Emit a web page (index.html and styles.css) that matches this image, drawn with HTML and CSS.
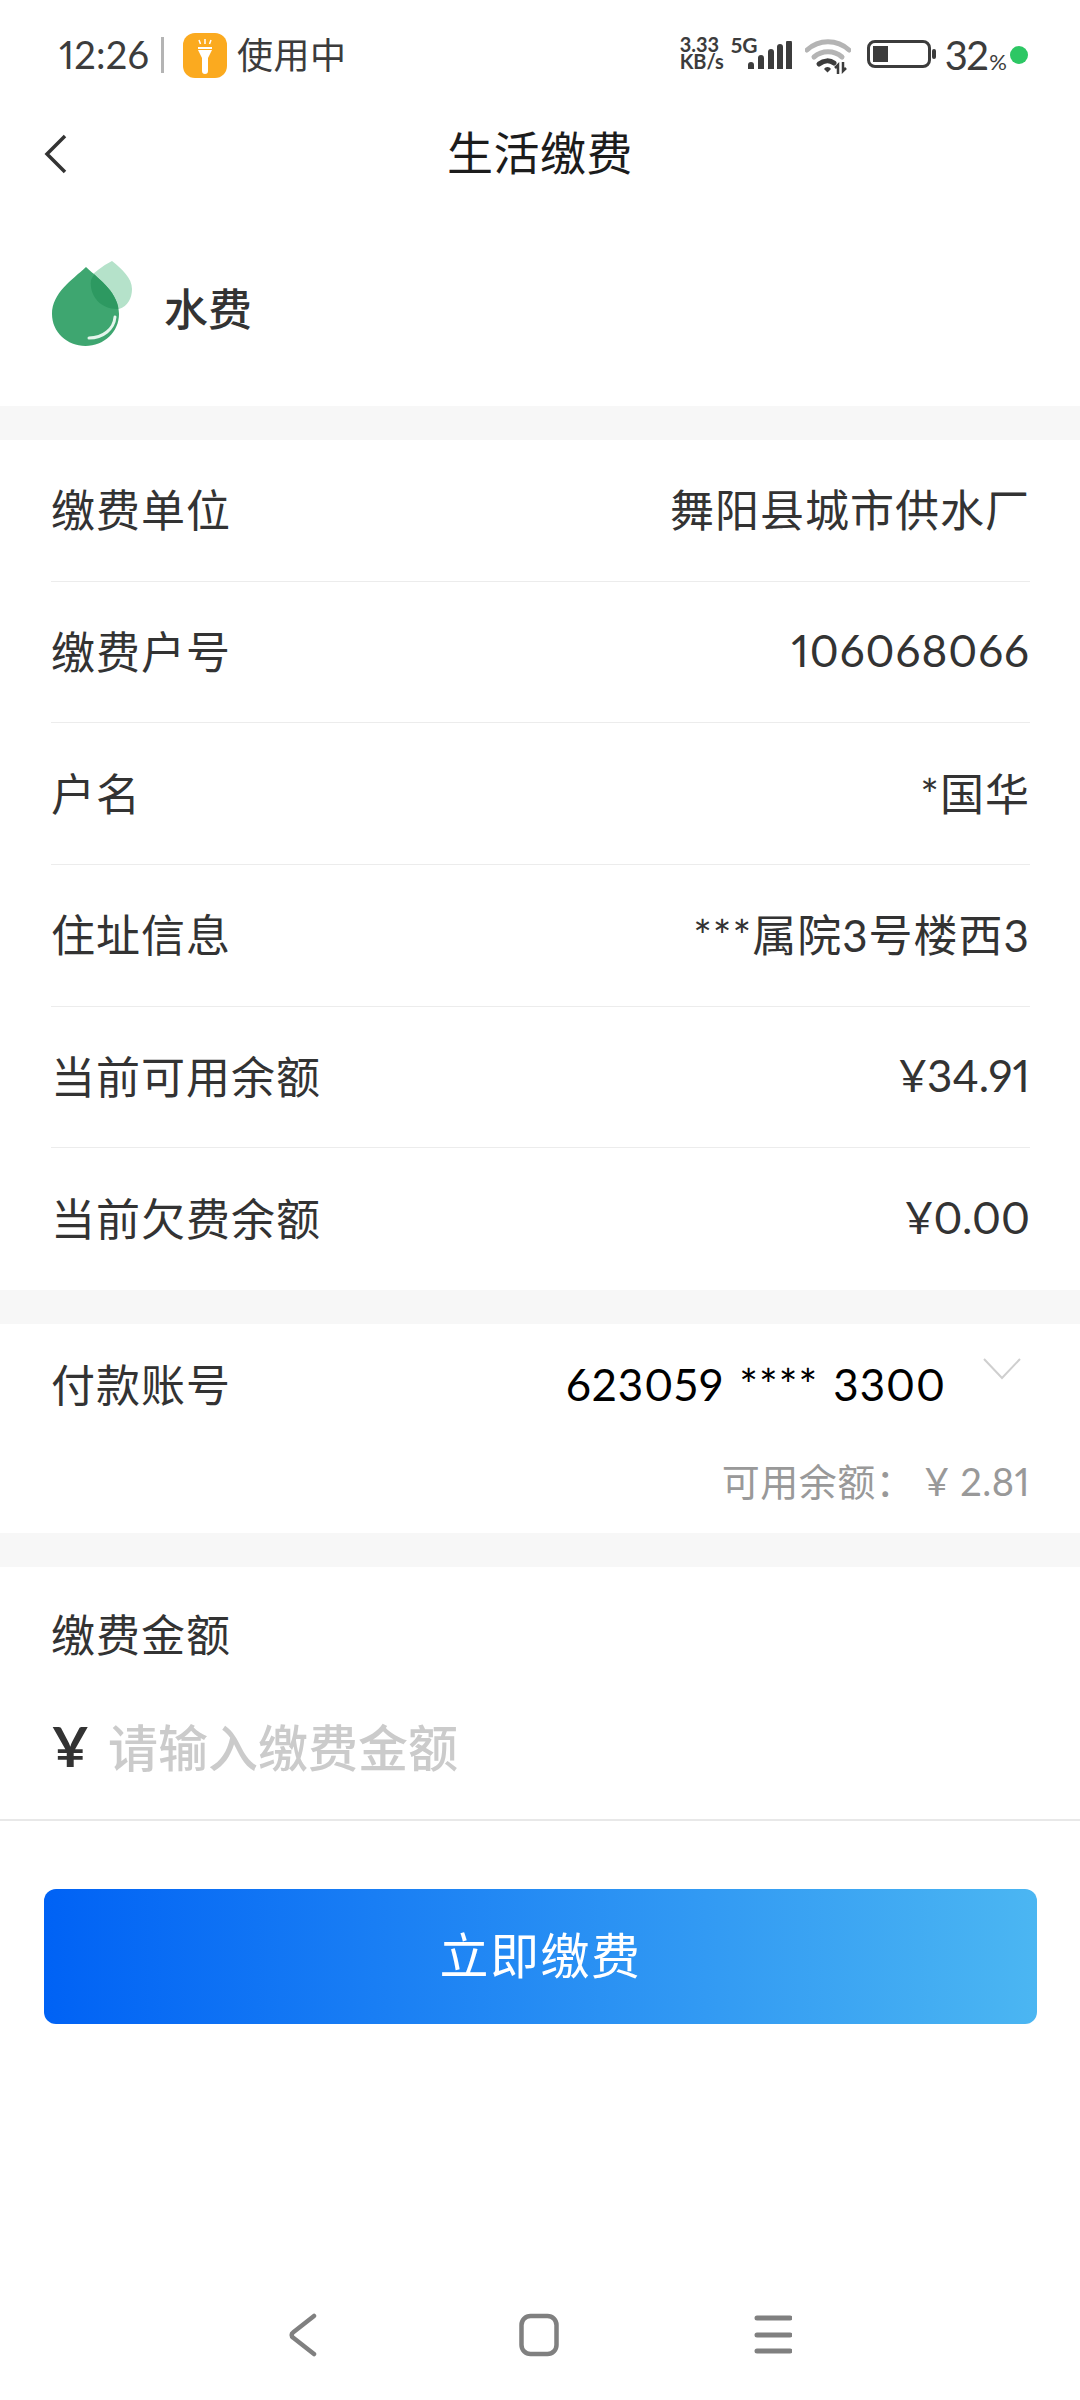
FILE: index.html
```html
<!DOCTYPE html>
<html lang="zh-CN">
<head>
  <meta charset="UTF-8" />
  <meta name="viewport" content="width=device-width, initial-scale=1.0"/>
  <title>生活缴费</title>
  <link rel="stylesheet" href="styles.css">
</head>

<body>
  <div class="page">
    <div class="status-bar">
      <div class="status-left">
        <span class="time">12:26</span>
        <span class="time-sep"></span>
        <span class="torch">
          <svg width="44" height="45" viewBox="0 0 44 45">
            <path d="M15 17h14l-4 8v13a3 3 0 0 1-6 0V25z" fill="#fff"/>
            <rect x="15" y="14" width="14" height="2" fill="#fff"/>
            <path d="M16 7l1.500 4M22 6v5M28 7l-1.500 4" stroke="#fff" stroke-width="1.500" fill="none"/>
          </svg>
        </span>
        <span class="in-use">使用中</span>
      </div>
      <div class="status-right">
        <div class="speed"><span>3.33</span><span>KB/s</span></div>
        <div class="net">
          <span class="net-5g">5G</span>
          <svg class="signal" width="45" height="28" viewBox="0 0 45 28">
            <path d="M1 28v-4a3 3 0 0 1 6 0v4zM11 28V17a3 3 0 0 1 6 0v11zM21 28V11a3 3 0 0 1 6 0v17zM30 28V6a3 3 0 0 1 6 0v22zM39 28V2a3 3 0 0 1 6 0v26z" fill="#3c3c3c"/>
          </svg>
        </div>
        <svg class="wifi" width="46" height="36" viewBox="0 0 46 36">
          <path d="M2 12C14 1 32 1 44 12" stroke="#b4b4b4" stroke-width="5" fill="none" stroke-linecap="round"/>
          <path d="M9 19c8-7 20-7 28 0" stroke="#b4b4b4" stroke-width="5" fill="none" stroke-linecap="round"/>
          <path d="M14 26c5-4 11-4 15-1" stroke="#3c3c3c" stroke-width="5" fill="none" stroke-linecap="round"/>
          <path d="M19 31a4 4 0 0 1 7 0l-3.500 3.500z" fill="#3c3c3c"/>
          <path d="M33 36V27l-3 3M38 24v9l3-3" stroke="#3c3c3c" stroke-width="2.500" fill="none"/>
        </svg>
        <div class="battery">
          <div class="battery-body"><span class="battery-level"></span></div>
          <span class="battery-nub"></span>
        </div>
        <div class="percent"><span class="percent-num">32</span><span class="percent-sign">%</span></div>
        <span class="green-dot"></span>
      </div>
    </div>

    <div class="nav-bar">
      <svg class="back" width="24" height="40" viewBox="0 0 24 40">
        <path d="M21 2L3 20l18 18" stroke="#333" stroke-width="3.500" fill="none"/>
      </svg>
      <h1 class="title">生活缴费</h1>
    </div>

    <div class="biller">
      <svg class="drop" width="90" height="95" viewBox="0 0 90 95">
        <defs>
          <clipPath id="mainDrop">
            <path d="M36 11C22 24 2 37 2 58c0 18 15 32 33.500 32S69 76 69 58C69 37 50 24 36 11z"/>
          </clipPath>
        </defs>
        <path d="M62 5C52 10 44 17 36 24c14 10 30 20 33 29 9-3 13-11 13-20C82 22 72 13 62 5z" fill="#b5e2ca"/>
        <path d="M36 11C22 24 2 37 2 58c0 18 15 32 33.500 32S69 76 69 58C69 37 50 24 36 11z" fill="#3ea670"/>
        <path d="M62 5C52 10 44 17 41 24c-2 14 8 30 28 29 9-3 13-11 13-20C82 22 72 13 62 5z" fill="#2d9961" clip-path="url(#mainDrop)"/>
        <path d="M65 61c-1 12-12 21-26 21" stroke="#e4f5ec" stroke-width="3" fill="none" stroke-linecap="round"/>
      </svg>
      <span class="biller-name">水费</span>
    </div>

    <div class="band"></div>

    <div class="info-list">
      <div class="info-row"><span>缴费单位</span><span>舞阳县城市供水厂</span></div>
      <div class="info-row"><span>缴费户号</span><span>106068066</span></div>
      <div class="info-row"><span>户名</span><span>*国华</span></div>
      <div class="info-row"><span>住址信息</span><span>***属院3号楼西3</span></div>
      <div class="info-row"><span>当前可用余额</span><span class="money">¥34.91</span></div>
      <div class="info-row"><span>当前欠费余额</span><span class="money">¥0.00</span></div>
    </div>

    <div class="band"></div>

    <div class="account">
      <div class="account-row">
        <span>付款账号</span>
        <div class="account-pick">
          <span class="account-no">623059 **** 3300</span>
          <svg class="chevron" width="38" height="22" viewBox="0 0 38 22">
            <path d="M1 1l18 19L37 1" stroke="#cfcfcf" stroke-width="2" fill="none"/>
          </svg>
        </div>
      </div>
      <div class="account-balance">可用余额： ¥ 2.81</div>
    </div>

    <div class="band"></div>

    <div class="amount">
      <div class="amount-label">缴费金额</div>
      <div class="amount-input">
        <span class="amount-yen">¥</span>
        <span class="amount-hint">请输入缴费金额</span>
      </div>
    </div>

    <div class="pay-wrap">
      <button class="pay-btn">立即缴费</button>
    </div>

    <div class="bottom-nav">
      <svg width="34" height="44" viewBox="0 0 34 44">
        <path d="M26 3L5 19.500a3 3 0 0 0 0 5L26 41" stroke="#808080" stroke-width="4.500" fill="none" stroke-linecap="round"/>
      </svg>
      <svg width="44" height="44" viewBox="0 0 44 44">
        <rect x="6.500" y="3" width="35" height="38" rx="9" stroke="#808080" stroke-width="4.500" fill="none"/>
      </svg>
      <svg width="40" height="44" viewBox="0 0 40 44">
        <path d="M5 5h33M5 22h33M5 38h33" stroke="#808080" stroke-width="5" fill="none" stroke-linecap="round"/>
      </svg>
    </div>
  </div>
</body>
</html>
```

FILE: styles.css
```css
* {
  box-sizing: border-box;
}

body {
  margin: 0;
  background-color: #fff;
  font-family: Lato, "Noto Sans CJK SC", sans-serif;
  font-variant-numeric: proportional-nums;
  color: #333;
}

.page {
  width: 1080px;
  height: 2400px;
  display: flex;
  flex-direction: column;
  overflow: hidden;
}

/* status bar */
.status-bar {
  height: 108px;
  padding: 32px 52px 0 59px;
  display: flex;
  justify-content: space-between;
  align-items: flex-start;
  color: #3c3c3c;
}

.status-left {
  display: flex;
  align-items: center;
  height: 46px;
}

.time {
  width: 91px;
  font-size: 38px;
  letter-spacing: 0.2px;
  margin-top: -2px;
}

.time-sep {
  width: 3px;
  height: 36px;
  margin: 0 19px 0 11px;
  background: #b4b4b4;
}

.torch {
  width: 44px;
  height: 45px;
  border-radius: 12px;
  background: #fbaa1f;
  display: flex;
}

.in-use {
  margin: -4px 0 0 10px;
  font-size: 36px;
  letter-spacing: 0.5px;
}

.status-right {
  display: flex;
  align-items: flex-start;
  height: 46px;
}

.speed {
  display: flex;
  flex-direction: column;
  width: 51px;
  padding-top: 4px;
  font-size: 20px;
  font-weight: 700;
  line-height: 17px;
}

.net {
  display: flex;
  flex-direction: column;
  position: relative;
  width: 60px;
}

.net-5g {
  font-size: 21px;
  font-weight: 700;
  line-height: 17px;
  padding-top: 4px;
}

.signal {
  position: absolute;
  top: 9px;
  left: 16px;
}

.wifi {
  margin: 6px 16px 0 14px;
}

.battery {
  display: flex;
  align-items: center;
  margin-top: 8px;
}

.battery-body {
  width: 64px;
  height: 28px;
  border: 3.5px solid #3c3c3c;
  border-radius: 8px;
  padding: 3px;
}

.battery-level {
  display: block;
  width: 15px;
  height: 100%;
  background: #3c3c3c;
}

.battery-nub {
  width: 4px;
  height: 10px;
  margin-left: 1px;
  border-radius: 2px;
  background: #3c3c3c;
}

.percent {
  display: flex;
  align-items: baseline;
  margin-left: 9px;
}

.percent-num {
  font-size: 40px;
  line-height: 46px;
  letter-spacing: -1.5px;
}

.percent-sign {
  margin-left: 2px;
  font-size: 22px;
}

.green-dot {
  width: 18px;
  height: 18px;
  margin: 14px 0 0 3px;
  border-radius: 50%;
  background: #2dc764;
}

/* title bar */
.nav-bar {
  height: 92px;
  padding-bottom: 8px;
  position: relative;
  display: flex;
  align-items: center;
  justify-content: center;
}

.back {
  position: absolute;
  left: 44px;
  top: 26px;
}

.title {
  margin: 0;
  font-size: 46px;
  font-weight: 400;
  letter-spacing: 0.5px;
  color: #1c1c1c;
}

/* biller */
.biller {
  height: 206px;
  padding: 0 0 0 50px;
  display: flex;
  align-items: center;
}

.drop {
  flex-shrink: 0;
}

.biller-name {
  margin: 8px 0 0 24px;
  font-size: 44px;
  font-weight: 500;
}

.band {
  height: 34px;
  background: #f7f7f7;
  flex-shrink: 0;
}

/* info rows */
.info-list {
  padding: 0 50px 0 51px;
}

.info-row {
  height: 141.7px;
  padding-bottom: 4px;
  display: flex;
  justify-content: space-between;
  align-items: center;
  font-size: 44px;
  letter-spacing: 1px;
  border-bottom: 1.5px solid #ececec;
}

.info-row:last-child {
  border-bottom: none;
}

.money {
  letter-spacing: 0;
}

/* pay account */
.account {
  height: 209px;
  padding: 0 50px 0 51px;
  font-size: 44px;
  letter-spacing: 1px;
}

.account-row {
  height: 118px;
  display: flex;
  justify-content: space-between;
  align-items: center;
}

.account-pick {
  display: flex;
  align-items: flex-start;
}

.account-no {
  color: #000;
  margin-top: 2px;
  letter-spacing: 1px;
  word-spacing: 3px;
}

.chevron {
  margin: 2px 9px 0 37px;
}

.account-balance {
  margin-top: 10px;
  text-align: right;
  font-size: 38px;
  letter-spacing: 0.5px;
  color: #999;
}

/* amount input */
.amount {
  height: 254px;
  padding: 0 0 0 51px;
  border-bottom: 2px solid #e8e8e8;
}

.amount-label {
  padding-top: 34px;
  font-size: 44px;
  letter-spacing: 1px;
}

.amount-input {
  margin-top: 44px;
  display: flex;
  align-items: center;
}

.amount-yen {
  font-size: 56px;
  font-weight: 700;
  width: 57px;
}

.amount-hint {
  font-size: 50px;
  font-weight: 500;
  color: #cbcbcb;
}

/* pay button */
.pay-wrap {
  padding: 68px 44px 0 44px;
  flex: 1;
}

.pay-btn {
  display: block;
  width: 993px;
  height: 135px;
  padding-bottom: 10px;
  border: none;
  border-radius: 12px;
  background: linear-gradient(90deg, #0062f5, #4bb6f2);
  color: #fff;
  font-family: inherit;
  font-size: 49px;
  letter-spacing: 1.500px;
}

/* system nav */
.bottom-nav {
  height: 130px;
  padding: 0 288px 43px;
  display: flex;
  justify-content: space-between;
  align-items: flex-end;
  flex-shrink: 0;
}
```
